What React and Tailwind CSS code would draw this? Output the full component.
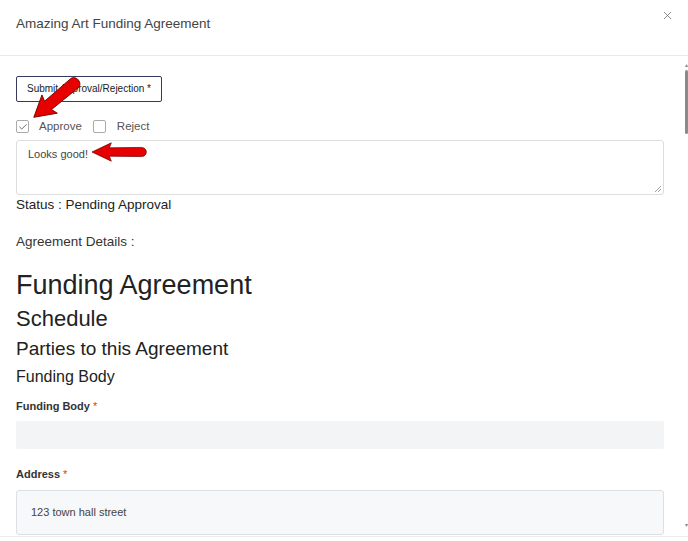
import { X, Check } from 'lucide-react'

function Arrow({ className }) {
  return (
    <svg className={className} viewBox="0 0 60 24" fill="none" preserveAspectRatio="none">
      <path d="M1 12 L21 1 L19 7 L52 6.5 C59 6.5 59 17.5 52 17.5 L19 17 L21 23 Z" fill="#e60000" stroke="#6e0000" strokeWidth="0.8" strokeLinejoin="round" />
    </svg>
  )
}

export default function App() {
  return (
    <div className="relative w-[688px] h-[541px] bg-white overflow-hidden font-['Liberation_Sans',Arial,sans-serif] text-[#333]">
      <div className="h-[56px] flex items-center justify-between pl-4 pr-[14px] border-b border-[#e8e8e8]">
        <div className="text-[13.5px] text-[#444] -mt-[6px]">Amazing Art Funding Agreement</div>
        <X className="w-[13px] h-[13px] text-[#777] -mt-[25px]" strokeWidth={1.6} />
      </div>

      <div className="h-[480px] overflow-hidden pl-4 pr-6 pt-[19px]">
        <button className="h-[26px] px-[10px] border border-[#343b5e] rounded-[2px] text-[10px] text-[#222] bg-white">
          Submit Approval/Rejection *
        </button>

        <div className="flex items-center h-[18px] mt-[16px] text-[11.5px] text-[#555]">
          <span className="w-[13px] h-[13px] border border-[#aaa] rounded-[2px] flex items-center justify-center">
            <Check className="w-[10px] h-[10px] text-[#555]" strokeWidth={2} />
          </span>
          <span className="ml-[10px]">Approve</span>
          <span className="w-[13px] h-[13px] border border-[#aaa] rounded-[2px] ml-[11px]" />
          <span className="ml-[11px]">Reject</span>
        </div>

        <div className="mt-[4px] h-[55px] border border-[#ddd] rounded-[3px] px-[11px] pt-[5px] text-[11px] text-[#444] relative">
          Looks good!
          <svg className="absolute right-[2px] bottom-[2px] w-[6px] h-[6px]" viewBox="0 0 6 6">
            <path d="M0 6 L6 0 M3 6 L6 3" stroke="#888" strokeWidth="0.8" />
          </svg>
        </div>

        <div className="text-[13.5px] leading-[16px] text-[#222] mt-[2px]">Status : Pending Approval</div>
        <div className="text-[13.5px] leading-[16px] text-[#333] mt-[21px]">Agreement Details :</div>

        <div className="text-[27px] text-[#222] mt-[20px] leading-[30px]">Funding Agreement</div>
        <div className="text-[22px] text-[#222] mt-[6px] leading-[26px]">Schedule</div>
        <div className="text-[19px] text-[#222] mt-[6px] leading-[22px]">Parties to this Agreement</div>
        <div className="text-[16px] text-[#222] mt-[7px] leading-[20px]">Funding Body</div>

        <div className="text-[11px] leading-[14px] font-bold text-[#333] mt-[12px]">
          Funding Body <span className="text-[#d33] font-normal">*</span>
        </div>
        <div className="mt-[8px] h-[28px] bg-[#f3f4f6] rounded-[2px]" />

        <div className="text-[11px] leading-[14px] font-bold text-[#333] mt-[18px]">
          Address <span className="text-[#d33] font-normal">*</span>
        </div>
        <div className="mt-[9px] h-[45px] bg-[#f7f8fa] border border-[#dcdfe4] rounded-[3px] flex items-center px-[14px] text-[11px] text-[#444]">
          123 town hall street
        </div>
      </div>

      <div className="border-t border-[#ececec]" />

      <div className="absolute right-0 top-[62px] w-[4px] h-[466px] flex flex-col items-end">
        <div className="text-[6px] leading-[6px] text-[#888]">▴</div>
        <div className="mt-[2px] h-[64px] w-[3px] bg-[#8a8a8a] rounded-full" />
        <div className="mt-auto text-[6px] leading-[6px] text-[#888]">▾</div>
      </div>

      <Arrow className="absolute left-[33px] top-[105px] w-[62px] h-[26px] -rotate-[40deg] origin-left" />
      <Arrow className="absolute left-[91px] top-[142px] w-[58px] h-[20px]" />
    </div>
  )
}
